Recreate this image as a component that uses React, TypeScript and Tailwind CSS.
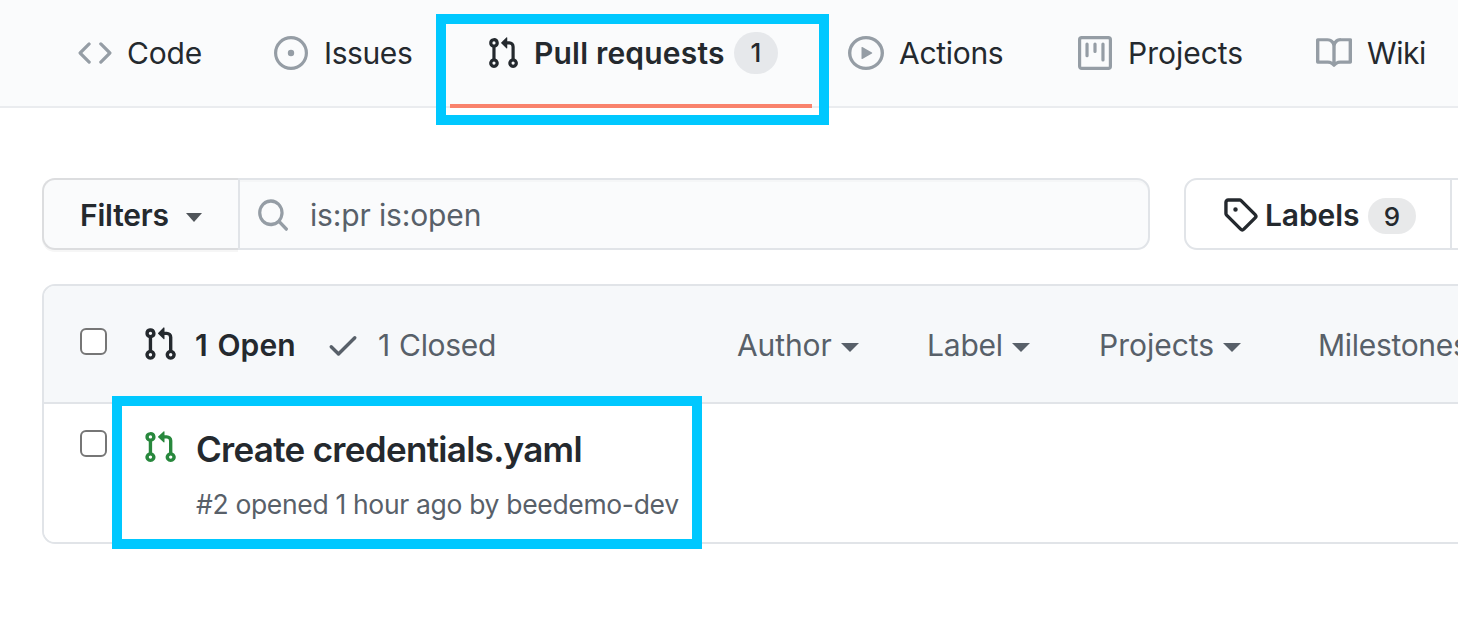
import type { ReactNode } from 'react';

const paths = {
  code: 'M4.72 3.22a.75.75 0 011.06 1.06L2.06 8l3.72 3.72a.75.75 0 11-1.06 1.06L.47 8.53a.75.75 0 010-1.06l4.25-4.25zm6.56 0a.75.75 0 10-1.06 1.06L13.94 8l-3.72 3.72a.75.75 0 101.06 1.06l4.25-4.25a.75.75 0 000-1.06l-4.25-4.25z',
  issue: 'M8 9.5a1.5 1.5 0 100-3 1.5 1.5 0 000 3zM8 0a8 8 0 100 16A8 8 0 008 0zM1.5 8a6.5 6.5 0 1113 0 6.5 6.5 0 01-13 0z',
  pull: 'M7.177 3.073L9.573.677A.25.25 0 0110 .854v4.792a.25.25 0 01-.427.177L7.177 3.427a.25.25 0 010-.354zM3.75 2.5a.75.75 0 100 1.5.75.75 0 000-1.5zm-2.25.75a2.25 2.25 0 113 2.122v5.256a2.251 2.251 0 11-1.5 0V5.372A2.25 2.25 0 011.5 3.25zM11 2.5h-1V4h1a1 1 0 011 1v5.628a2.251 2.251 0 101.5 0V5A2.5 2.5 0 0011 2.5zm1 10.25a.75.75 0 111.5 0 .75.75 0 01-1.5 0zM3.75 12a.75.75 0 100 1.5.75.75 0 000-1.5z',
  play: 'M1.5 8a6.5 6.5 0 1113 0 6.5 6.5 0 01-13 0zM8 0a8 8 0 100 16A8 8 0 008 0zM6.379 5.227A.25.25 0 006 5.442v5.117a.25.25 0 00.379.214l4.264-2.559a.25.25 0 000-.428L6.379 5.227z',
  project: 'M1.75 0A1.75 1.75 0 000 1.75v12.5C0 15.216.784 16 1.75 16h12.5A1.75 1.75 0 0016 14.25V1.75A1.75 1.75 0 0014.25 0H1.75zM1.5 1.75a.25.25 0 01.25-.25h12.5a.25.25 0 01.25.25v12.5a.25.25 0 01-.25.25H1.75a.25.25 0 01-.25-.25V1.75zM11.75 3a.75.75 0 00-.75.75v7.5a.75.75 0 001.5 0v-7.5a.75.75 0 00-.75-.75zm-8.25.75a.75.75 0 011.5 0v5.5a.75.75 0 01-1.5 0v-5.5zM8 3a.75.75 0 00-.75.75v3.5a.75.75 0 001.5 0v-3.5A.75.75 0 008 3z',
  book: 'M0 1.75A.75.75 0 01.75 1h4.253c1.227 0 2.317.59 3 1.501A3.744 3.744 0 0111.006 1h4.245a.75.75 0 01.75.75v10.5a.75.75 0 01-.75.75h-4.507a2.25 2.25 0 00-1.591.659l-.622.621a.75.75 0 01-1.06 0l-.622-.621A2.25 2.25 0 005.258 13H.75a.75.75 0 01-.75-.75V1.75zm8.755 3a2.25 2.25 0 012.25-2.25H14.5v9h-3.757c-.71 0-1.4.201-1.992.572l.004-7.322zm-1.504 7.324l.004-5.073-.002-2.253A2.25 2.25 0 005.003 2.5H1.5v9h3.757a3.75 3.75 0 011.994.574z',
  search: 'M11.5 7a4.499 4.499 0 11-8.998 0A4.499 4.499 0 0111.5 7zm-.82 4.74a6 6 0 111.06-1.06l3.04 3.04a.75.75 0 11-1.06 1.06l-3.04-3.04z',
  tag: 'M2.5 7.775V2.75a.25.25 0 01.25-.25h5.025a.25.25 0 01.177.073l6.25 6.25a.25.25 0 010 .354l-5.025 5.025a.25.25 0 01-.354 0l-6.25-6.25a.25.25 0 01-.073-.177zm-1.5 0V2.75C1 1.784 1.784 1 2.75 1h5.025c.464 0 .91.184 1.238.513l6.25 6.25a1.75 1.75 0 010 2.474l-5.026 5.026a1.75 1.75 0 01-2.474 0l-6.25-6.25A1.75 1.75 0 011 7.775zM6 5a1 1 0 100 2 1 1 0 000-2z',
  check: 'M13.78 4.22a.75.75 0 010 1.06l-7.25 7.25a.75.75 0 01-1.06 0L2.22 9.28a.75.75 0 011.06-1.06L6 10.94l6.72-6.72a.75.75 0 011.06 0z',
};

function Icon({ name, className }: { name: keyof typeof paths; className: string }) {
  return (
    <svg viewBox="0 0 16 16" preserveAspectRatio="none" fill="currentColor" fillRule="evenodd" className={`block shrink-0 ${className}`} aria-hidden="true">
      <path fillRule="evenodd" d={paths[name]} />
    </svg>
  );
}

function Caret({ className }: { className: string }) {
  return (
    <svg viewBox="0 0 18 9" fill="currentColor" preserveAspectRatio="none" className={`block h-[9px] shrink-0 ${className}`} aria-hidden="true">
      <path d="M0 0H18L9 9Z" />
    </svg>
  );
}

function Tab({ icon, iconClass, width, children }: { icon: keyof typeof paths; iconClass: string; width: string; children: ReactNode }) {
  return (
    <a className={`flex shrink-0 items-center whitespace-nowrap ${width}`}>
      <Icon name={icon} className={`text-[#959da5] ${iconClass}`} />
      {children}
    </a>
  );
}

function Menu({ width, label, caret }: { width: string; label: ReactNode; caret: boolean }) {
  return (
    <button className={`flex shrink-0 items-center whitespace-nowrap text-left ${width}`}>
      {label}
      {caret && <Caret className="mt-[5px] ml-[9px] w-[18px]" />}
    </button>
  );
}

function Checkbox({ className }: { className: string }) {
  return <span role="checkbox" aria-checked="false" className={`block h-[27px] w-[27px] shrink-0 rounded-[6px] border-2 border-[#767676] bg-white ${className}`} />;
}

export default function App() {
  return (
    <div className="relative h-[618px] w-[1458px] overflow-hidden bg-white font-['Inter',sans-serif] text-[30px] leading-[40px] text-[#24292e]">
      <nav className="flex h-[108px] border-b-2 border-[#eaecef] bg-[#fafbfc] pl-[78px]">
        <Tab icon="code" iconClass="mr-[15px] h-[34px] w-[34px]" width="w-[196px]">
          <span className="tracking-[-0.2px]">Code</span>
        </Tab>
        <Tab icon="issue" iconClass="mr-[16px] h-[34px] w-[34px]" width="w-[176px]">
          <span className="tracking-[-0.4px]">Issues</span>
        </Tab>
        <a className="-mb-0.5 flex w-[362px] shrink-0 items-center border-b-4 border-[#f9826c] pt-0.5 pl-[36px] whitespace-nowrap">
          <Icon name="pull" className="h-[34px] w-[34px]" />
          <span className="ml-[14px] w-[200px] font-semibold tracking-[0.2px]">Pull requests</span>
          <span className="flex h-[42px] w-[44px] items-center justify-center rounded-full bg-[#e6e8eb] text-[26px] font-medium">1</span>
        </a>
        <div className="w-9 shrink-0" />
        <Tab icon="play" iconClass="mr-[15px] h-[34px] w-[36px]" width="w-[230px]">
          <span className="tracking-[-0.3px]">Actions</span>
        </Tab>
        <Tab icon="project" iconClass="mr-[16px] h-[34px] w-[34px]" width="w-[238px]">
          <span>Projects</span>
        </Tab>
        <Tab icon="book" iconClass="mr-[15px] h-[34px] w-[36px]" width="w-[142px]">
          <span className="tracking-[-0.4px]">Wiki</span>
        </Tab>
      </nav>

      <div className="mt-[70px] flex h-[72px] pl-[42px]">
        <button className="flex h-[72px] w-[196px] shrink-0 items-center rounded-l-[13px] border-2 border-r-0 border-[#dcdddf] bg-[#fafbfc] pt-0.5 pl-[36px] shadow-[0_2px_0_rgba(27,31,35,0.04)]">
          <span className="w-[106px] text-left font-semibold tracking-[-0.2px]">Filters</span>
          <Caret className="mt-1 w-4 text-[#4f5459]" />
        </button>
        <div className="flex h-[72px] w-[912px] shrink-0 items-center rounded-r-[13px] border-2 border-[#e1e4e8] bg-[#fafbfc] pt-0.5 pl-[16px] shadow-[inset_0_2px_0_rgba(225,228,232,0.2)]">
          <Icon name="search" className="h-[36px] w-[34px] text-[#959da5]" />
          <span className="ml-[20px] tracking-[-0.15px] text-[#586069]">is:pr is:open</span>
        </div>
        <div className="ml-[34px] flex h-[72px] w-[300px] shrink-0 rounded-l-[13px] border-2 border-[#e1e4e8]">
          <a className="flex w-[266px] items-center border-r-2 border-[#e1e4e8] pt-0.5 pl-[36px]">
            <Icon name="tag" className="-mt-0.5 h-[36px] w-[36px]" />
            <span className="ml-[7px] w-[103px] font-semibold tracking-[-0.1px]">Labels</span>
            <span className="mt-px flex h-[36px] w-[48px] items-center justify-center rounded-full bg-[#e8e9ea] pt-0.5 text-[26px] font-medium">9</span>
          </a>
        </div>
      </div>

      <div className="mt-[34px] ml-[42px] h-[260px] w-[1500px] overflow-hidden rounded-[13px] border-2 border-[#e1e4e8]">
        <div className="flex h-[118px] items-center border-b-2 border-[#e1e4e8] bg-[#f6f8fa] pt-0.5 pl-[36px] whitespace-nowrap text-[#586069]">
          <Checkbox className="-mt-[7px]" />
          <Icon name="pull" className="-mt-0.5 ml-[35px] h-[36px] w-[36px] text-[#24292e]" />
          <span className="ml-[17px] w-[130px] font-semibold tracking-[0.1px] [word-spacing:2px] text-[#24292e]">1 Open</span>
          <Icon name="check" className="h-[36px] w-[36px]" />
          <span className="ml-[17px] w-[359px] tracking-[-0.3px] [word-spacing:1px]">1 Closed</span>
          <Menu width="w-[190px]" caret label={<span className="tracking-[-0.1px]">Author</span>} />
          <Menu width="w-[172px]" caret label={<span className="tracking-[-0.2px]">Label</span>} />
          <Menu width="w-[219px]" caret label={<span>Projects</span>} />
          <Menu width="w-[180px]" caret={false} label={<span className="tracking-[-0.3px]">Milestones</span>} />
        </div>
        <div className="flex h-[138px] bg-white pt-[26px] pl-[36px] whitespace-nowrap">
          <Checkbox className="" />
          <Icon name="pull" className="ml-[35px] h-[34px] w-[36px] text-[#28883d]" />
          <div className="ml-[18px] flex flex-col">
            <span className="-mt-px text-[35px] font-semibold tracking-[-0.7px]">Create credentials.yaml</span>
            <span className="mt-[15px] text-[26.5px] tracking-[-0.33px] text-[#586069]">#2 opened 1 hour ago by beedemo-dev</span>
          </div>
        </div>
      </div>

      <div className="absolute top-[14px] left-[436px] h-[111px] w-[393px] border-10 border-[#00c8ff]" />
      <div className="absolute top-[396px] left-[112px] h-[153px] w-[590px] border-10 border-[#00c8ff]" />
    </div>
  );
}
